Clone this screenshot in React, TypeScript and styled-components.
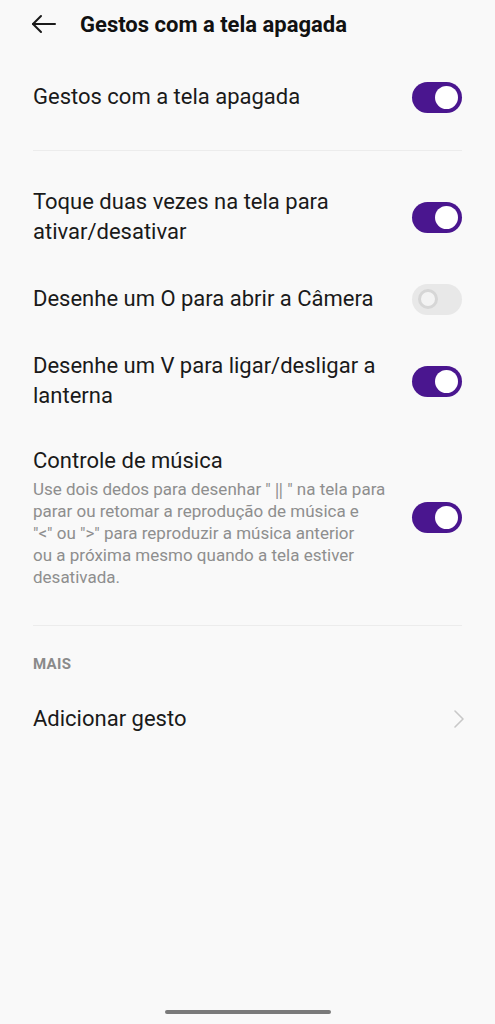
import React from 'react';
import styled, { createGlobalStyle } from 'styled-components';

const GlobalStyle = createGlobalStyle`
  html, body {
    margin: 0;
    padding: 0;
    background: #f9f9f9;
  }
  body {
    font-family: Roboto, "Noto Sans", "Liberation Sans", sans-serif;
    color: #1a1a1a;
  }
`;

const Screen = styled.div`
  width: 495px;
  height: 1024px;
  background: #f9f9f9;
  display: flex;
  flex-direction: column;
  box-sizing: border-box;
  overflow: hidden;
`;

const Header = styled.header`
  height: 48px;
  display: flex;
  align-items: center;
  padding: 0 0 0 31px;
  gap: 22px;
`;

const BackButton = styled.button`
  border: 0;
  background: none;
  padding: 0;
  width: 27px;
  height: 24px;
  display: flex;
  align-items: center;
  color: #1a1a1a;
`;

const Title = styled.h1`
  margin: 0;
  font-size: 22px;
  font-weight: 700;
  color: #111;
`;

const Content = styled.main`
  flex: 1;
  padding: 0 33px;
  display: flex;
  flex-direction: column;
`;

const Row = styled.div<{ $minH: number }>`
  min-height: ${(p) => p.$minH}px;
  display: flex;
  align-items: center;
  justify-content: space-between;
  gap: 20px;
`;

const TextCol = styled.div`
  flex: 1;
  display: flex;
  flex-direction: column;
`;

const Label = styled.div`
  font-size: 22px;
  line-height: 30px;
  color: #1a1a1a;
  white-space: nowrap;
`;

const Desc = styled.div`
  margin-top: 2px;
  font-size: 17px;
  line-height: 22px;
  color: #8e8e8e;
  white-space: nowrap;
`;

const Divider = styled.hr<{ $top: number; $bottom: number }>`
  border: 0;
  height: 1px;
  background: #ececec;
  margin: ${(p) => p.$top}px 0 ${(p) => p.$bottom}px;
`;

const SectionTitle = styled.div`
  font-size: 15px;
  font-weight: 700;
  color: #8a8a8a;
  letter-spacing: 0.3px;
  height: 30px;
  display: flex;
  align-items: center;
`;

const Track = styled.div<{ $on: boolean }>`
  flex: none;
  width: 50px;
  height: 31px;
  border-radius: 16px;
  background: ${(p) => (p.$on ? '#4a168f' : '#e8e8e8')};
  display: flex;
  align-items: center;
  justify-content: ${(p) => (p.$on ? 'flex-end' : 'flex-start')};
  padding: 0 4px;
  box-sizing: border-box;
`;

const Knob = styled.div<{ $on: boolean }>`
  border-radius: 50%;
  box-sizing: border-box;
  background: ${(p) => (p.$on ? '#fff' : '#f3f3f3')};
  border: ${(p) => (p.$on ? '0' : '3px solid #d6d6d6')};
  width: ${(p) => (p.$on ? 23 : 20)}px;
  height: ${(p) => (p.$on ? 23 : 20)}px;
  margin-left: ${(p) => (p.$on ? 0 : 2)}px;
`;

const Chevron = styled.svg`
  flex: none;
  margin-right: -3px;
`;

const HomeBar = styled.div`
  align-self: center;
  width: 166px;
  height: 4px;
  border-radius: 2px;
  background: #7a7a7a;
  margin-bottom: 10px;
`;

const Toggle: React.FC<{ on: boolean }> = ({ on }) => (
  <Track $on={on}>
    <Knob $on={on} />
  </Track>
);

const App: React.FC = () => (
  <>
    <GlobalStyle />
    <Screen>
      <Header>
        <BackButton aria-label="Voltar">
          <svg width="26" height="20" viewBox="0 0 26 20" fill="none" stroke="#1a1a1a" strokeWidth="2" strokeLinecap="round" strokeLinejoin="round">
            <path d="M2 10h22" />
            <path d="M10 2L2 10l8 8" />
          </svg>
        </BackButton>
        <Title>Gestos com a tela apagada</Title>
      </Header>
      <Content>
        <Row $minH={96} style={{ marginTop: 1 }}>
          <Label>Gestos com a tela apagada</Label>
          <Toggle on />
        </Row>
        <Divider $top={5} $bottom={20} />
        <Row $minH={92}>
          <TextCol>
            <Label>Toque duas vezes na tela para<br />ativar/desativar</Label>
          </TextCol>
          <Toggle on />
        </Row>
        <Row $minH={72}>
          <Label>Desenhe um O para abrir a Câmera</Label>
          <Toggle on={false} />
        </Row>
        <Row $minH={92}>
          <TextCol>
            <Label>Desenhe um V para ligar/desligar a<br />lanterna</Label>
          </TextCol>
          <Toggle on />
        </Row>
        <Row $minH={180}>
          <TextCol>
            <Label>Controle de música</Label>
            <Desc>
              Use dois dedos para desenhar "{'\u2009'}‖{'\u2009'}" na tela para<br />
              parar ou retomar a reprodução de música e<br />
              "&lt;" ou "&gt;" para reproduzir a música anterior<br />
              ou a próxima mesmo quando a tela estiver<br />
              desativada.
            </Desc>
          </TextCol>
          <Toggle on />
        </Row>
        <Divider $top={18} $bottom={23} />
        <SectionTitle>MAIS</SectionTitle>
        <Row $minH={80}>
          <Label>Adicionar gesto</Label>
          <Chevron width="12" height="20" viewBox="0 0 12 20" fill="none" stroke="#c8c8c8" strokeWidth="1.6" strokeLinecap="round" strokeLinejoin="round">
            <path d="M2 2l8 8-8 8" />
          </Chevron>
        </Row>
      </Content>
      <HomeBar />
    </Screen>
  </>
);

export default App;
